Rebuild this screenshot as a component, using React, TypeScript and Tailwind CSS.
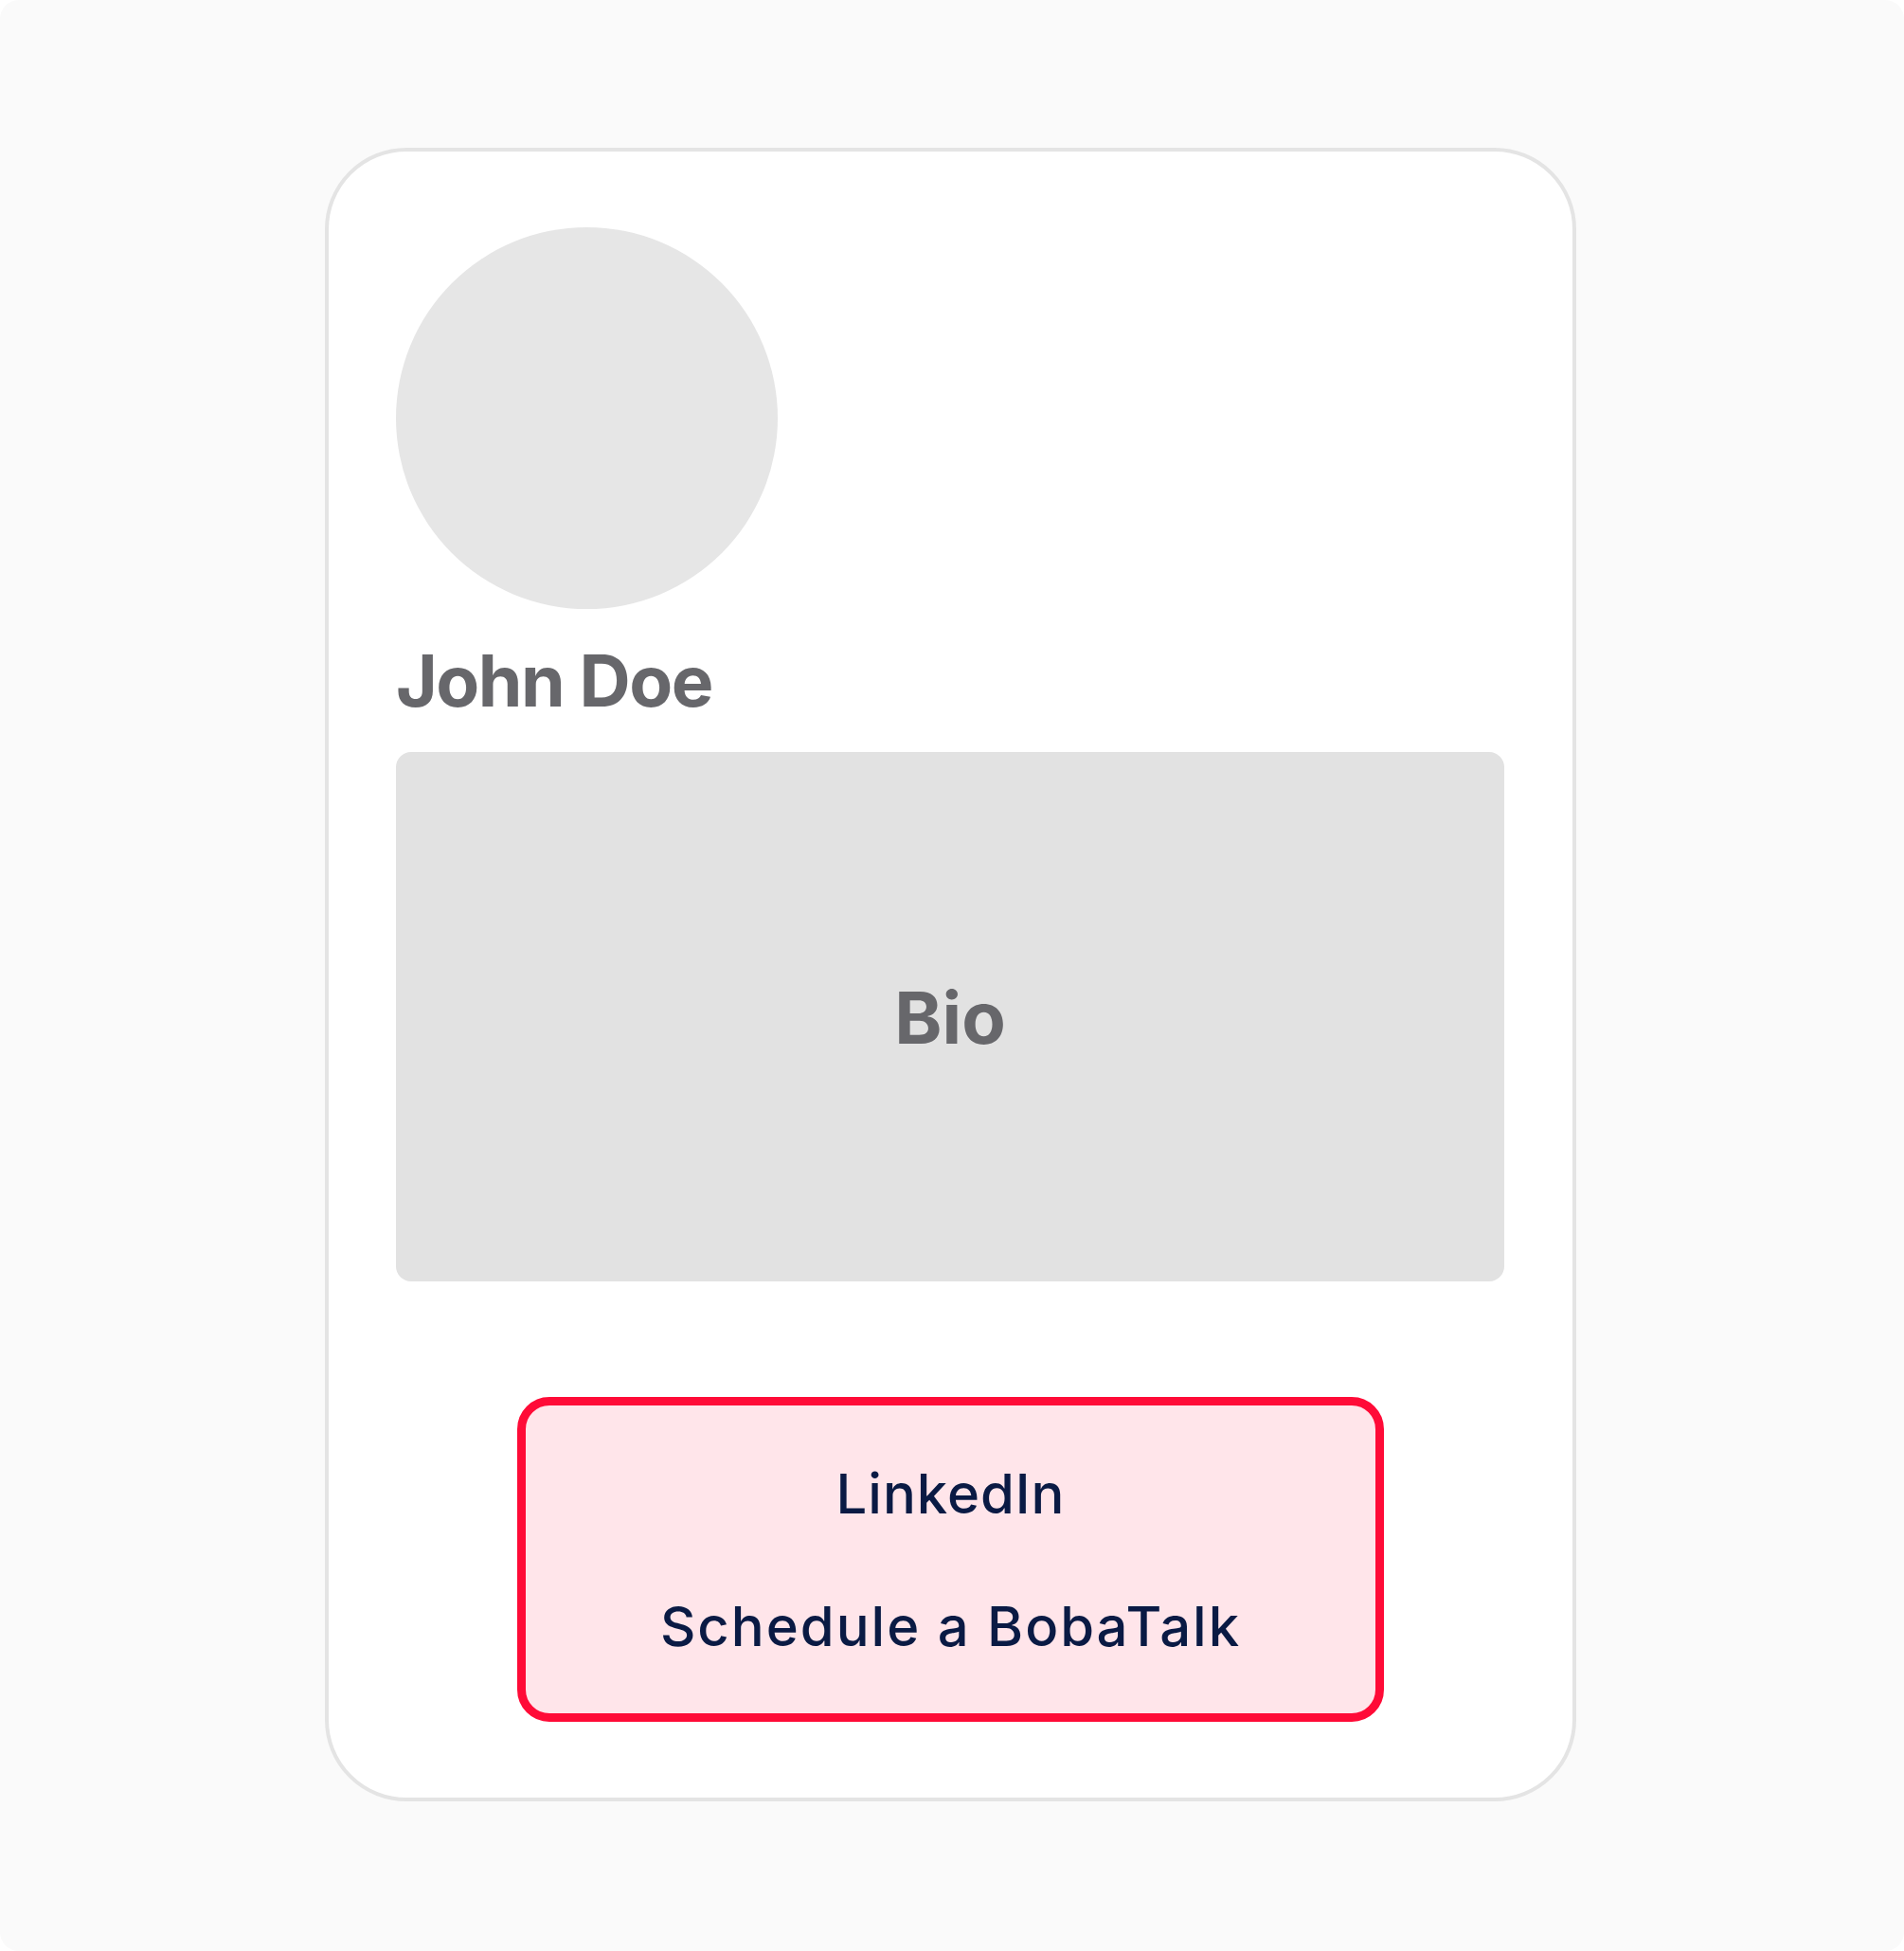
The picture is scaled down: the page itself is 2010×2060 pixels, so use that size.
import React from "react";

export default function App() {
  return (
    <div className="w-[2010px] h-[2060px] bg-white">
      <div className="w-full h-full rounded-[20px] bg-[#fafafa] pt-[156px] pl-[343px]">
        <div
          className="w-[1321px] h-[1746px] rounded-[86px] border-[4px] border-[#e4e4e4] bg-white px-[71px] pt-[80px] flex flex-col"
          style={{ fontFamily: "Inter, 'Noto Sans', sans-serif" }}
        >
          <div className="w-[403px] h-[403px] rounded-full bg-[#e6e6e6]" />
          <div className="mt-[38px] h-[75px] text-[75px] leading-[75px] font-bold text-[#67676b] tracking-[-1.5px]">
            John Doe
          </div>
          <div className="mt-[38px] h-[559px] w-[1170px] rounded-[16px] bg-[#e2e2e2] flex items-center justify-center">
            <span className="text-[76px] leading-none font-bold text-[#67676b]">Bio</span>
          </div>
          <div className="mt-[122px] mx-auto w-[915px] h-[343px] rounded-[34px] border-[9px] border-[#ff0b37] bg-[#ffe5ea] flex flex-col items-center justify-center gap-[82px] text-[#0a1a44]">
            <span className="text-[58px] leading-none font-medium tracking-[1px]">LinkedIn</span>
            <span className="text-[58px] leading-none font-medium tracking-[2px]">Schedule a BobaTalk</span>
          </div>
        </div>
      </div>
    </div>
  );
}
